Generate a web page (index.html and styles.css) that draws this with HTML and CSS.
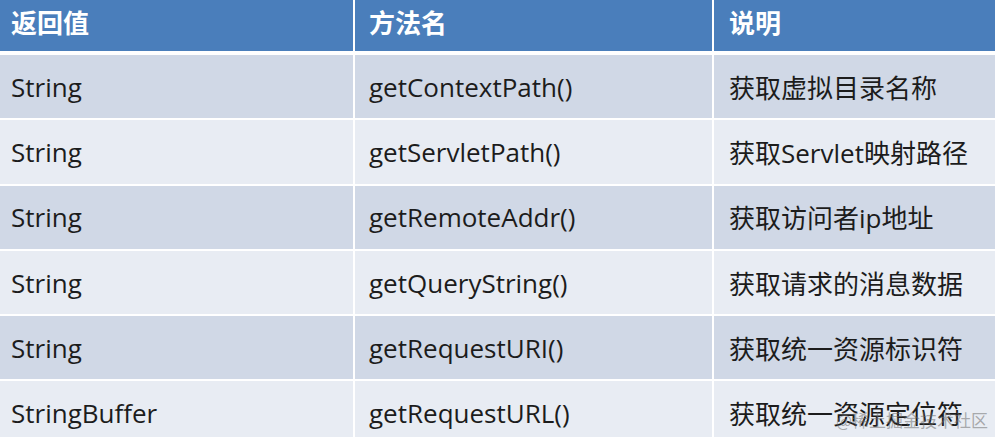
FILE: index.html
```html
<!DOCTYPE html>
<html lang="zh">
<head>
<meta charset="utf-8">
<link rel="stylesheet" href="styles.css">
</head>
<body>
<div class="page">
  <div class="table">
    <div class="row head">
      <div class="cell">返回值</div>
      <div class="cell">方法名</div>
      <div class="cell">说明</div>
    </div>
    <div class="row dark">
      <div class="cell">String</div>
      <div class="cell">getContextPath()</div>
      <div class="cell">获取虚拟目录名称</div>
    </div>
    <div class="row light">
      <div class="cell">String</div>
      <div class="cell">getServletPath()</div>
      <div class="cell">获取Servlet映射路径</div>
    </div>
    <div class="row dark">
      <div class="cell">String</div>
      <div class="cell">getRemoteAddr()</div>
      <div class="cell">获取访问者ip地址</div>
    </div>
    <div class="row light">
      <div class="cell">String</div>
      <div class="cell">getQueryString()</div>
      <div class="cell">获取请求的消息数据</div>
    </div>
    <div class="row dark">
      <div class="cell">String</div>
      <div class="cell">getRequestURI()</div>
      <div class="cell">获取统一资源标识符</div>
    </div>
    <div class="row light">
      <div class="cell">StringBuffer</div>
      <div class="cell">getRequestURL()</div>
      <div class="cell">获取统一资源定位符</div>
    </div>
  </div>
  <div class="watermark">@稀土掘金技术社区</div>
</div>
</body>
</html>
```

FILE: styles.css
```css
html, body {
  margin: 0;
  padding: 0;
  background: #ffffff;
}
.page {
  position: relative;
  width: 995px;
  height: 437px;
  overflow: hidden;
  font-family: "Open Sans", "Noto Sans CJK SC", sans-serif;
}
.table {
  display: flex;
  flex-direction: column;
  gap: 2px;
}
.row {
  display: grid;
  grid-template-columns: 353px 357px 1fr;
  column-gap: 2px;
  height: 63.3px;
}
.row.head {
  height: 51px;
  margin-bottom: 2px;
}
.cell {
  display: flex;
  align-items: center;
  padding-left: 11px;
  font-size: 26px;
  color: #1c1c1c;
  white-space: nowrap;
}
.row .cell:nth-child(2) { padding-left: 14px; }
.row .cell:nth-child(3) { padding-left: 15px; }
.head .cell {
  background: #4a7ebb;
  color: #ffffff;
  font-weight: bold;
  padding-bottom: 8px;
}
.dark .cell { background: #d0d8e6; }
.light .cell { background: #e8ecf3; }
.watermark {
  position: absolute;
  right: 7px;
  bottom: 7px;
  font-size: 17px;
  line-height: 20px;
  color: rgba(110, 110, 110, 0.55);
  font-family: "Noto Sans CJK SC", sans-serif;
}
```
